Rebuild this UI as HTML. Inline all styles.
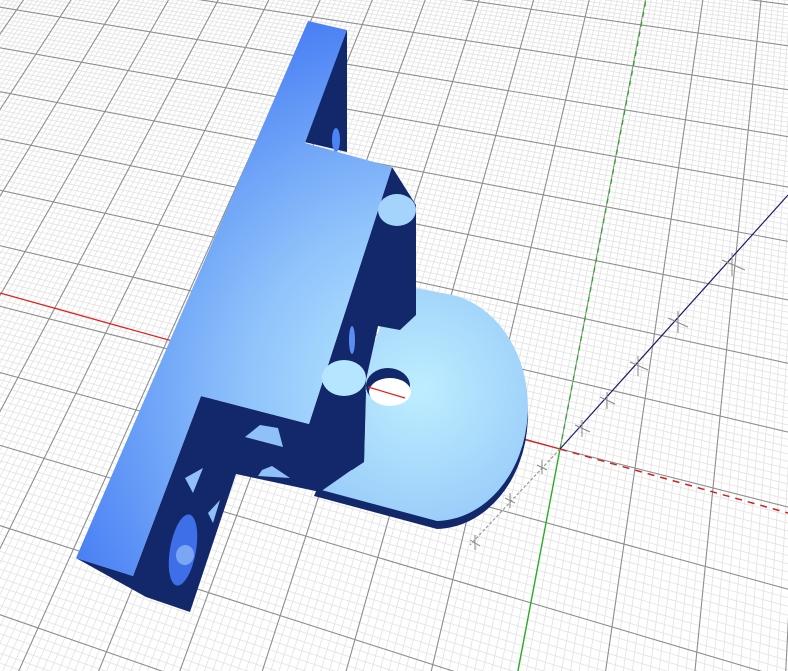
<!DOCTYPE html>
<html><head><meta charset="utf-8"><style>
html,body{margin:0;padding:0;background:#fff;overflow:hidden;width:788px;height:671px}
svg{display:block;overflow:hidden}
</style></head><body>
<svg id="s" width="788" height="671" viewBox="0 0 788 671" xmlns="http://www.w3.org/2000/svg">
<defs>
<radialGradient id="gf" cx="420" cy="390" r="380" gradientUnits="userSpaceOnUse">
<stop offset="0" stop-color="#bdeeff"/><stop offset="0.45" stop-color="#90c4fb"/><stop offset="1" stop-color="#4a80f4"/>
</radialGradient>
<radialGradient id="gd" cx="420" cy="390" r="180" gradientUnits="userSpaceOnUse">
<stop offset="0" stop-color="#bdeeff"/><stop offset="1" stop-color="#8fc2f8"/>
</radialGradient>
<clipPath id="cp"><rect x="0" y="0" width="788" height="671"/></clipPath>
</defs>
<g clip-path="url(#cp)">
<g id="minor" stroke="#e2e2e2" stroke-width="0.8" fill="none"></g>
<g id="major" stroke="#8e8e8e" stroke-width="1.1" fill="none"></g>
<g id="axes">
<line x1="0" y1="293" x2="560" y2="449" stroke="#e02020" stroke-width="1.3"/>
<line x1="560" y1="449" x2="788" y2="513" stroke="#d02020" stroke-width="1.5" stroke-dasharray="7,6"/>
<line x1="560" y1="449" x2="646" y2="0" stroke="#20b020" stroke-width="1.3" stroke-dasharray="5,5"/>
<line x1="560" y1="449" x2="518" y2="671" stroke="#20b020" stroke-width="1.3"/>
<line x1="560" y1="449" x2="788" y2="195" stroke="#1a1a6a" stroke-width="1.2"/>
<line x1="560" y1="449" x2="470" y2="545" stroke="#999" stroke-width="1.2" stroke-dasharray="3,2"/>
<g stroke="#888" stroke-width="1">
<line x1="575" y1="425" x2="590" y2="432"/><line x1="582" y1="420" x2="582" y2="437"/>
<line x1="600" y1="397" x2="615" y2="404"/><line x1="607" y1="392" x2="607" y2="409"/>
<line x1="630" y1="362" x2="648" y2="370"/><line x1="638" y1="356" x2="638" y2="376"/>
<line x1="668" y1="318" x2="688" y2="327"/><line x1="678" y1="311" x2="678" y2="333"/>
<line x1="722" y1="260" x2="745" y2="270"/><line x1="732" y1="253" x2="732" y2="276"/>
<line x1="537" y1="465" x2="547" y2="470"/><line x1="542" y1="460" x2="542" y2="474"/>
<line x1="505" y1="498" x2="515" y2="503"/><line x1="510" y1="493" x2="510" y2="508"/>
<line x1="470" y1="540" x2="480" y2="546"/><line x1="475" y1="535" x2="475" y2="550"/>
</g>
</g>
<path d="M398,293 L447,302 A93,114 0 0 1 437,529 L314,496 Z" fill="#13286a"/>
<path d="M398,285 L447,294 A93,114 0 0 1 437,521 L314,488 Z" fill="url(#gd)"/>
<ellipse cx="388" cy="386" rx="22" ry="18" fill="#13286a"/>
<ellipse cx="390" cy="392" rx="21" ry="14" fill="#fff"/>
<line x1="368" y1="387" x2="405" y2="398" stroke="#e02020" stroke-width="1.2"/>
<polygon points="347,30 347,152 300,141" fill="#13286a"/>
<ellipse cx="336" cy="140" rx="4" ry="12" fill="#4d84f5"/>
<polygon points="392,167 416,205 416,315 400,330 378,326 366,380 364,462 352,470 330,468 309,424" fill="#13286a"/>
<ellipse cx="352" cy="340" rx="3" ry="14" fill="#5a8ef5"/>
<polygon points="201,396 309,424 322,400 366,392 364,462 350,471 320,492 236,474 190,612 146,597 76,558 133,576" fill="#13286a"/>
<polygon points="308,21 347,30 305,143 392,167 309,424 201,396 133,576 76,558" fill="url(#gf)"/>
<ellipse cx="397" cy="210" rx="19" ry="16" fill="#a4d4fb"/>
<ellipse cx="344" cy="378" rx="22" ry="18" fill="#b6e6ff"/>
<polygon points="260,425 278,428 283,447 245,437" fill="#8fc1f8"/>
<polygon points="262,470 272,466 290,478 258,476" fill="#8fc1f8"/>
<polygon points="185,478 203,468 193,493" fill="#8fc1f8"/>
<polygon points="208,513 220,500 213,523" fill="#8fc1f8"/>
<ellipse cx="183" cy="550" rx="13" ry="36" fill="#3f6fe8" transform="rotate(10 183 550)"/>
<ellipse cx="185" cy="555" rx="9" ry="10" fill="#7aa6f4" transform="rotate(10 185 555)"/>
</g>
</svg>
<script>
(function(){
var src=[[0,0],[1,8],[1,-2],[-1,-1]],dst=[[560,449],[698,33],[612,627],[471,502]];
var A=[],b=[];
for(var i=0;i<4;i++){var x=src[i][0],y=src[i][1],X=dst[i][0],Y=dst[i][1];
A.push([x,y,1,0,0,0,-X*x,-X*y]);b.push(X);
A.push([0,0,0,x,y,1,-Y*x,-Y*y]);b.push(Y);}
var n=8;for(var c=0;c<n;c++){var p=c;for(var r=c+1;r<n;r++)if(Math.abs(A[r][c])>Math.abs(A[p][c]))p=r;
var t=A[c];A[c]=A[p];A[p]=t;t=b[c];b[c]=b[p];b[p]=t;
for(var r=0;r<n;r++){if(r==c)continue;var f=A[r][c]/A[c][c];for(var k=c;k<n;k++)A[r][k]-=f*A[c][k];b[r]-=f*b[c];}}
var h=[];for(var i=0;i<n;i++)h.push(b[i]/A[i][i]);
function P(u,v){var w=h[6]*u+h[7]*v+1;return [(h[0]*u+h[1]*v+h[2])/w,(h[3]*u+h[4]*v+h[5])/w,w];}
var ns="http://www.w3.org/2000/svg";
var gm=document.getElementById('minor'),gM=document.getElementById('major');
function inView(p){return p[2]>0.02&&p[0]>-50&&p[0]<840&&p[1]>-50&&p[1]<720;}
function drawLine(g,f){
  var first=null,last=null;
  for(var t=-40;t<=40;t+=0.05){var p=f(t);if(inView(p)){if(!first)first=p;last=p;}else if(first)break;}
  if(first&&last&&first!==last){var l=document.createElementNS(ns,'line');
  l.setAttribute('x1',first[0].toFixed(1));l.setAttribute('y1',first[1].toFixed(1));
  l.setAttribute('x2',last[0].toFixed(1));l.setAttribute('y2',last[1].toFixed(1));g.appendChild(l);}
}
for(var k=-400;k<=400;k++){var q=k/10;var g=(k%10==0)?gM:gm;
  drawLine(g,function(t){return P(q,t);});
  drawLine(g,function(t){return P(t,q);});
}
})();
</script>
</body></html>
